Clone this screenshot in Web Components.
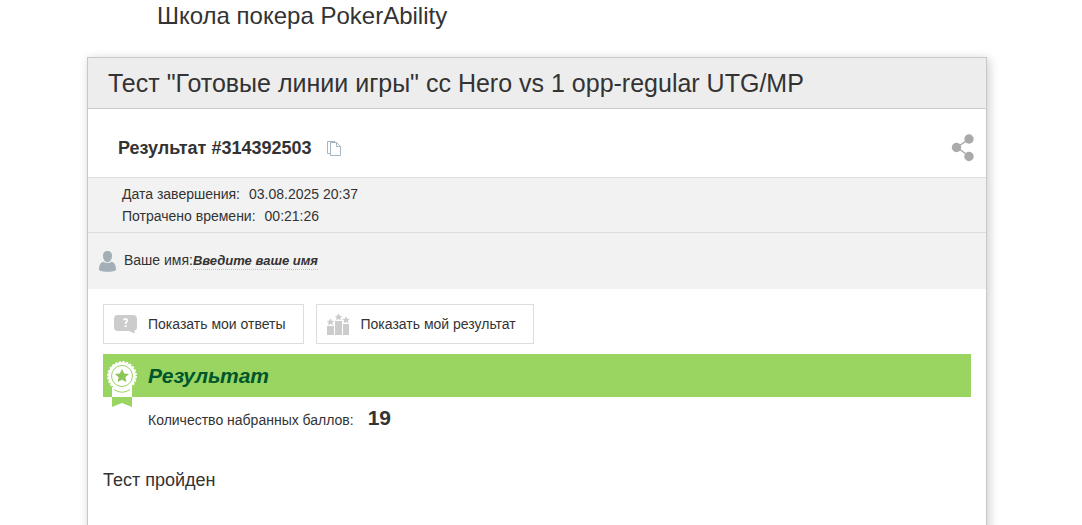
<!DOCTYPE html>
<html lang="ru">
<head>
<meta charset="utf-8">
<meta name="viewport" content="width=device-width, initial-scale=1">
<title>Школа покера PokerAbility</title>
<style>
  body { margin: 0; background: #fff; color: #333; font: 14px/22px "Liberation Sans", Arial, sans-serif; }
</style>
</head>
<body>
<quiz-page></quiz-page>
<script>
  const define = (name, html) => {
    const template = document.createElement('template');
    template.innerHTML = html;
    customElements.define(name, class extends HTMLElement {
      constructor() {
        super();
        this.attachShadow({ mode: 'open' }).append(template.content.cloneNode(true));
      }
    });
  };

  define('icon-copy', `
    <style>:host { display: block; width: 14px; height: 16px } svg { display: block }</style>
    <svg width="14" height="16" viewBox="0 0 14 16" fill="none" stroke="#a5b5c1" aria-hidden="true">
      <path d="M3 13.500H.5V1.500H8"/><path d="M3.500 2.500H9.500L13.500 6.500V15.500H3.500Z" fill="#fff"/><path d="M9.500 2.500V6.500H13.500"/>
    </svg>`);

  define('icon-share', `
    <style>:host { display: block; width: 24px; height: 28px } svg { display: block }</style>
    <svg width="24" height="28" viewBox="0 0 24 28" fill="#aaa" aria-hidden="true">
      <path d="M18 5L6 13.500L18 22" fill="none" stroke="#aaa" stroke-width="1.500"/>
      <circle cx="18" cy="5" r="4.700"/><circle cx="5.500" cy="13.500" r="4.700"/><circle cx="18" cy="22.500" r="4.700"/>
    </svg>`);

  define('icon-user', `
    <style>:host { display: block; width: 17px; height: 21px } svg { display: block }</style>
    <svg width="17" height="21" viewBox="0 0 17 21" fill="#a3afb6" aria-hidden="true">
      <path d="M8.500 0C5.400 0 3.900 2.200 4 5C4.100 8.500 6 11.200 8.500 11.200S12.900 8.500 13 5C13.100 2.200 11.600 0 8.500 0Z"/>
      <path d="M4.200 10.800C1.300 11.800 0 14 0 19.300C2.500 20.500 5.500 20.800 8.500 20.800S14.500 20.500 17 19.300C17 14 15.700 11.800 12.800 10.800C11.600 11.600 10.200 12 8.500 12S5.400 11.600 4.200 10.800Z"/>
    </svg>`);

  define('icon-answers', `
    <style>:host { display: block; width: 24px; height: 20px } svg { display: block }</style>
    <svg width="24" height="20" viewBox="0 0 24 20" aria-hidden="true">
      <path d="M4 1H19Q23 1 23 5V13Q23 16 20.500 16.500L20.500 19.500L15 17H4Q0 17 0 13V5Q0 1 4 1Z" fill="#ccc"/>
      <path d="M9.300 5.700Q13.300 3.900 13.300 6.400C13.300 8 11.500 8 11.500 10" fill="none" stroke="#fff" stroke-width="1.700"/>
      <rect x="10.600" y="11.200" width="1.900" height="1.900" fill="#fff"/>
    </svg>`);

  define('icon-podium', `
    <style>:host { display: block; width: 24px; height: 22px } svg { display: block }</style>
    <svg width="24" height="22" viewBox="0 0 24 22" fill="#ccc" aria-hidden="true">
      <defs><path id="star" d="M0-3.700L1.200-1.300L3.700-1L1.900.7L2.400 3.200L0 2L-2.400 3.200L-1.900.7L-3.700-1L-1.200-1.300Z"/></defs>
      <path d="M0 13H7V22H0ZM8 8H15V22H8ZM16 11H22V22H16Z"/>
      <use href="#star" x="3.500" y="9"/><use href="#star" x="11.500" y="4"/><use href="#star" x="19" y="7"/>
    </svg>`);

  define('icon-award', `
    <style>:host { display: block; width: 30px; height: 46px } svg { display: block }</style>
    <svg width="30" height="46" viewBox="0 0 30 46" aria-hidden="true">
      <path d="M5 26H25V36H5Z" fill="#fff"/>
      <path d="M7 28.500Q15 34 23 28.500" fill="none" stroke="#9ad461"/>
      <path d="M5 36H25V46L15 42L5 46Z" fill="#9ad461"/>
      <circle cx="15" cy="15" r="13.800" fill="#fff"/>
      <circle cx="15" cy="15" r="14" fill="none" stroke="#fff" stroke-width="1.800" stroke-dasharray="2.200 1.465"/>
      <circle cx="15" cy="15" r="10.500" fill="none" stroke="#9ad461"/>
      <path d="M15 8L17.200 12.500L22 13.100L18.400 16.300L19.400 21L15 18.700L10.600 21L11.600 16.300L8 13.100L12.800 12.500Z" fill="#8bc656"/>
    </svg>`);

  define('action-button', `
    <style>
      :host { display: block }
      button { display: flex; align-items: center; height: 40px; padding: 0 17px 0 10px; border: 1px solid #ddd; background: #fff; color: inherit; font: inherit; cursor: pointer }
      .icon { padding-right: 10px }
    </style>
    <button type="button"><span class="icon"><slot name="icon"></slot></span><slot></slot></button>`);

  define('result-heading', `
    <style>
      :host { display: block; padding: 0 11px 0 30px; border-bottom: 1px solid #ddd }
      .row { display: flex; align-items: center; height: 68px; padding-top: 9px; box-sizing: border-box }
      h2 { margin: 0 15px 0 0; font-size: 18px; line-height: 24px }
      button { padding: 0; border: 0; background: none; cursor: pointer }
      .share { margin-left: auto }
    </style>
    <div class="row">
      <h2><slot></slot></h2>
      <button type="button" aria-label="Скопировать"><icon-copy></icon-copy></button>
      <button class="share" type="button" aria-label="Поделиться"><icon-share></icon-share></button>
    </div>`);

  define('result-details', `
    <style>
      :host { display: block; background: #f2f2f2 }
      dl { margin: 0; padding: 5px 34px; border-bottom: 1px solid #ddd }
      dl div { display: flex; gap: 9px }
      dd { margin: 0 }
      .name { display: flex; align-items: center; height: 56px; padding: 0 11px }
      label { margin-left: 8px; line-height: 24px; padding-bottom: 2px }
      input { field-sizing: content; height: 16px; padding: 0; border: 0; border-bottom: 1px dotted #b9c6d0; background: none; color: #333; font: italic bold 13px/15px "Liberation Sans", Arial, sans-serif }
      input::placeholder { color: #333; opacity: 1 }
    </style>
    <dl>
      <div><dt>Дата завершения:</dt><dd>03.08.2025 20:37</dd></div>
      <div><dt>Потрачено времени:</dt><dd>00:21:26</dd></div>
    </dl>
    <div class="name"><icon-user></icon-user><label for="name">Ваше имя:</label><input id="name" type="text" placeholder="Введите ваше имя"></div>`);

  define('score-panel', `
    <style>
      :host { display: block }
      header { display: flex; height: 43px; padding-left: 4px; background: #9ad461; color: #00562c }
      icon-award { margin-top: 7px }
      h2 { margin: 0 11px; font: italic bold 21px/43px "Liberation Sans", Arial, sans-serif }
      p { display: flex; align-items: baseline; gap: 14px; margin: 8px 0 0 45px; line-height: 26px }
      strong { font-size: 21px }
    </style>
    <header><icon-award></icon-award><h2>Результат</h2></header>
    <p><span>Количество набранных баллов:</span><strong><slot></slot></strong></p>`);

  define('quiz-card', `
    <style>
      :host { display: block; box-sizing: border-box; min-height: calc(100vh - 45px); border: 1px solid #c8c8c8; background: #fff; box-shadow: 2px 2px 10px rgba(0, 0, 0, .2) }
      h1 { margin: 0; padding: 10px 20px; border-bottom: 1px solid #ccc; background: #ededed; font-size: 25px; font-weight: 400; line-height: 30px }
      .content { padding: 15px }
      .actions { display: flex; flex-wrap: wrap; gap: 12px; margin-bottom: 10px }
      .message { margin: 34px 0 0; font-size: 18px; line-height: 26px }
    </style>
    <h1><slot></slot></h1>
    <result-heading>Результат #314392503</result-heading>
    <result-details></result-details>
    <div class="content">
      <div class="actions">
        <action-button><icon-answers slot="icon"></icon-answers>Показать мои ответы</action-button>
        <action-button><icon-podium slot="icon"></icon-podium>Показать мой результат</action-button>
      </div>
      <score-panel>19</score-panel>
      <p class="message">Тест пройден</p>
    </div>`);

  define('quiz-page', `
    <style>
      :host { display: block; padding-right: 8px; overflow: hidden }
      main { max-width: 900px; margin: 0 auto }
      .school { margin: 0 70px; padding-bottom: 25px; font-size: 24px; line-height: 32px }
    </style>
    <main>
      <p class="school">Школа покера PokerAbility</p>
      <quiz-card>Тест "Готовые линии игры" сс Hero vs 1 opp-regular UTG/MP</quiz-card>
    </main>`);
</script>
</body>
</html>
